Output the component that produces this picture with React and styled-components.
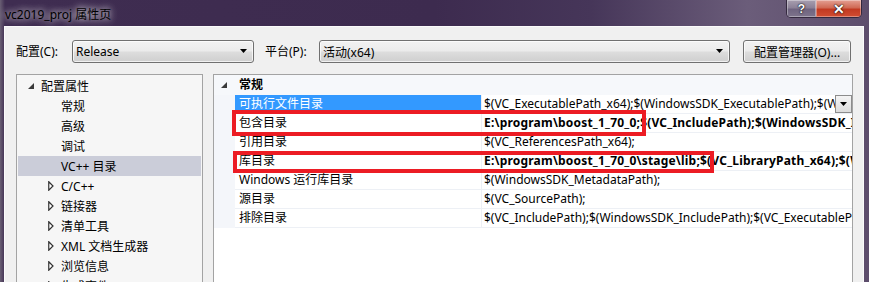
import React from 'react';
import styled, { createGlobalStyle } from 'styled-components';

const Global = createGlobalStyle`
  * { box-sizing: border-box; }
  html, body { margin: 0; padding: 0; background: #3d2b4f; overflow: hidden; }
  #root { width: 869px; height: 282px; }
`;

const FONT = `"Noto Sans", "Noto Sans CJK SC", sans-serif`;

const Frame = styled.div`
  width: 869px;
  height: 282px;
  overflow: hidden;
  display: flex;
  flex-direction: column;
  background: linear-gradient(to right, #6a5f74 0px, #3f2d51 5px, #3d2b4f 50%, #463659 68%, #6b5d7a 86%, #5d4d6c 100%);
  font-family: ${FONT};
  font-size: 12px;
  color: #000;
`;

const TitleBar = styled.div`
  height: 26px;
  flex: none;
  display: flex;
  align-items: flex-start;
`;

const Title = styled.div`
  margin: 6px 0 0 5px;
  line-height: 18px;
  color: #000;
  text-shadow: 0 0 6px rgba(255, 255, 255, 0.85), 0 0 10px rgba(255, 255, 255, 0.6);
`;

const Caption = styled.div`
  margin-left: auto;
  margin-right: 7px;
  display: flex;
  border: 1px solid rgba(40, 30, 50, 0.8);
  border-top: none;
  border-radius: 0 0 5px 5px;
  overflow: hidden;
  height: 18px;
`;

const CapButton = styled.div`
  width: ${p => p.w}px;
  height: 17px;
  display: flex;
  align-items: center;
  justify-content: center;
  color: #fff;
  font-family: "Liberation Sans", sans-serif;
  font-weight: bold;
  font-size: ${p => (p.close ? 14 : 12)}px;
  text-shadow: 0 0 2px #000, 0 0 1px #000;
  box-shadow: inset 0 0 0 1px rgba(255, 255, 255, 0.35);
  background: ${p =>
    p.close
      ? 'linear-gradient(#e4a093 0%, #d06a55 45%, #c23a22 55%, #d24d32 100%)'
      : 'linear-gradient(#a89fb0 0%, #8c8197 45%, #6f6480 55%, #7e748c 100%)'};
`;

const Client = styled.div`
  flex: 1;
  min-height: 0;
  margin: 0 5px 0 4px;
  border: 1px solid #fbfbfb;
  border-bottom: none;
  background: #f0f0f0;
  padding: 13px 10px 0 11px;
  display: flex;
  flex-direction: column;
`;

const Toolbar = styled.div`
  display: flex;
  align-items: center;
  height: 23px;
  flex: none;
`;

const Label = styled.div`
  width: ${p => p.w}px;
  margin-left: ${p => p.ml || 0}px;
  line-height: 23px;
  white-space: nowrap;
`;

const Combo = styled.div`
  width: ${p => p.w}px;
  height: 23px;
  border: 1px solid #707070;
  border-radius: 3px;
  background: linear-gradient(#f2f2f2 0%, #ebebeb 48%, #dddddd 52%, #cfcfcf 100%);
  display: flex;
  align-items: center;
  padding: 0 3px 0 3px;
  box-shadow: inset 0 0 0 1px rgba(255, 255, 255, 0.7);
`;

const ComboText = styled.div`
  flex: 1;
  white-space: nowrap;
  overflow: hidden;
`;

const Arrow = () => (
  <svg width="8" height="5" viewBox="0 0 8 5">
    <polygon points="0,0 7,0 3.5,4" fill="#000" />
  </svg>
);

const ArrowBox = styled.div`
  width: 12px;
  display: flex;
  justify-content: center;
`;

const Button = styled.div`
  width: 108px;
  height: 23px;
  margin-left: 13px;
  border: 1px solid #707070;
  border-radius: 3px;
  background: linear-gradient(#f2f2f2 0%, #ebebeb 48%, #dddddd 52%, #cfcfcf 100%);
  box-shadow: inset 0 0 0 1px rgba(255, 255, 255, 0.7);
  display: flex;
  align-items: center;
  justify-content: center;
  white-space: nowrap;
`;

const Panels = styled.div`
  margin-top: 11px;
  flex: 1;
  min-height: 0;
  display: flex;
  gap: 10px;
  align-items: stretch;
`;

const TreePanel = styled.div`
  width: 187px;
  flex: none;
  border: 1px solid #a3a3a3;
  border-bottom: none;
  background: #f6f6f6;
  padding: 1px;
  overflow: hidden;
`;

const TreeRow = styled.div`
  height: 20px;
  display: flex;
  align-items: center;
  padding-left: ${p => 8 + p.level * 20}px;
  background: ${p => (p.selected ? '#cbcdd9' : 'transparent')};
  white-space: nowrap;
`;

const Toggle = styled.div`
  width: 15px;
  height: 20px;
  flex: none;
  display: flex;
  align-items: center;
  padding-left: 2px;
`;

const Expanded = () => (
  <svg width="6" height="6" viewBox="0 0 6 6">
    <polygon points="6,0 6,6 0,6" fill="#3a3a3a" />
  </svg>
);

const Collapsed = () => (
  <svg width="6" height="10" viewBox="0 0 6 10">
    <polygon points="0.75,0.75 5,5 0.75,9.25" fill="#fff" stroke="#333" strokeWidth="1.2" />
  </svg>
);

const GridPanel = styled.div`
  position: relative;
  width: 640px;
  flex: none;
  border: 1px solid #a3a3a3;
  border-bottom: none;
  background: #fff;
  overflow: hidden;
`;

const CategoryRow = styled.div`
  height: 20px;
  display: grid;
  grid-template-columns: 21px 1fr;
  background: #f6f8fb;
`;

const CatToggle = styled.div`
  display: flex;
  align-items: center;
  padding-left: 7px;
`;

const CatLabel = styled.div`
  font-weight: bold;
  line-height: 20px;
  padding-left: 4px;
`;

const PropRow = styled.div`
  height: 19px;
  display: grid;
  grid-template-columns: 21px 247px 1fr;
`;

const Gutter = styled.div`
  background: #f4f6fa;
`;

const NameCell = styled.div`
  border-bottom: 1px solid #edf0f5;
  border-right: 1px solid #edf0f5;
  padding-left: 4px;
  line-height: 18px;
  white-space: nowrap;
  overflow: hidden;
  background: ${p => (p.selected ? '#3399ff' : '#fff')};
  color: ${p => (p.selected ? '#fff' : '#000')};
`;

const ValueCell = styled.div`
  border-bottom: 1px solid #edf0f5;
  padding-left: 2px;
  display: flex;
  min-width: 0;
  overflow: hidden;
`;

const ValueText = styled.div`
  flex: 1;
  min-width: 0;
  overflow: hidden;
  white-space: nowrap;
  line-height: 18px;
  font-weight: ${p => (p.bold ? 'bold' : 'normal')};
  letter-spacing: ${p => (p.bold ? '0.2px' : '0')};
`;

const DropButton = styled.div`
  width: 17px;
  height: 18px;
  flex: none;
  border: 1px solid #8c8c8c;
  background: linear-gradient(#f4f4f4, #dcdcdc);
  display: flex;
  align-items: center;
  justify-content: center;
`;

const Mark = styled.div`
  position: absolute;
  left: ${p => p.x}px;
  top: ${p => p.y}px;
  width: ${p => p.w}px;
  height: ${p => p.h}px;
  border: 4px solid #ec1c24;
  pointer-events: none;
`;

const tree = [
  { label: '配置属性', level: 0, state: 'open' },
  { label: '常规', level: 1 },
  { label: '高级', level: 1 },
  { label: '调试', level: 1 },
  { label: 'VC++ 目录', level: 1, selected: true },
  { label: 'C/C++', level: 1, state: 'closed' },
  { label: '链接器', level: 1, state: 'closed' },
  { label: '清单工具', level: 1, state: 'closed' },
  { label: 'XML 文档生成器', level: 1, state: 'closed' },
  { label: '浏览信息', level: 1, state: 'closed' },
  { label: '生成事件', level: 1, state: 'closed' },
];

const props = [
  { name: '可执行文件目录', value: '$(VC_ExecutablePath_x64);$(WindowsSDK_ExecutablePath);$(WindowsSDK_ExecutablePath_x64)', selected: true },
  { name: '包含目录', value: 'E:\\program\\boost_1_70_0;$(VC_IncludePath);$(WindowsSDK_IncludePath);', bold: true },
  { name: '引用目录', value: '$(VC_ReferencesPath_x64);' },
  { name: '库目录', value: 'E:\\program\\boost_1_70_0\\stage\\lib;$(VC_LibraryPath_x64);$(WindowsSDK_LibraryPath_x64)', bold: true },
  { name: 'Windows 运行库目录', value: '$(WindowsSDK_MetadataPath);' },
  { name: '源目录', value: '$(VC_SourcePath);' },
  { name: '排除目录', value: '$(VC_IncludePath);$(WindowsSDK_IncludePath);$(VC_ExecutablePath_x64);' },
];

export default function App() {
  return (
    <>
      <Global />
      <Frame>
        <TitleBar>
          <Title>vc2019_proj 属性页</Title>
          <Caption>
            <CapButton w={29}>?</CapButton>
            <CapButton w={45} close>✕</CapButton>
          </Caption>
        </TitleBar>
        <Client>
          <Toolbar>
            <Label w={56}>配置(C):</Label>
            <Combo w={182}>
              <ComboText>Release</ComboText>
              <ArrowBox><Arrow /></ArrowBox>
            </Combo>
            <Label w={54} ml={11}>平台(P):</Label>
            <Combo w={411}>
              <ComboText>活动(x64)</ComboText>
              <ArrowBox><Arrow /></ArrowBox>
            </Combo>
            <Button>配置管理器(O)...</Button>
          </Toolbar>
          <Panels>
            <TreePanel>
              {tree.map(t => (
                <TreeRow key={t.label} level={t.level} selected={t.selected}>
                  <Toggle>
                    {t.state === 'open' && <Expanded />}
                    {t.state === 'closed' && <Collapsed />}
                  </Toggle>
                  {t.label}
                </TreeRow>
              ))}
            </TreePanel>
            <GridPanel>
              <CategoryRow>
                <CatToggle><Expanded /></CatToggle>
                <CatLabel>常规</CatLabel>
              </CategoryRow>
              {props.map(p => (
                <PropRow key={p.name}>
                  <Gutter />
                  <NameCell selected={p.selected}>{p.name}</NameCell>
                  <ValueCell>
                    <ValueText bold={p.bold}>{p.value}</ValueText>
                    {p.selected && (
                      <DropButton><Arrow /></DropButton>
                    )}
                  </ValueCell>
                </PropRow>
              ))}
              <Mark x={18} y={35} w={414} h={26} />
              <Mark x={19} y={76} w={481} h={22} />
            </GridPanel>
          </Panels>
        </Client>
      </Frame>
    </>
  );
}
